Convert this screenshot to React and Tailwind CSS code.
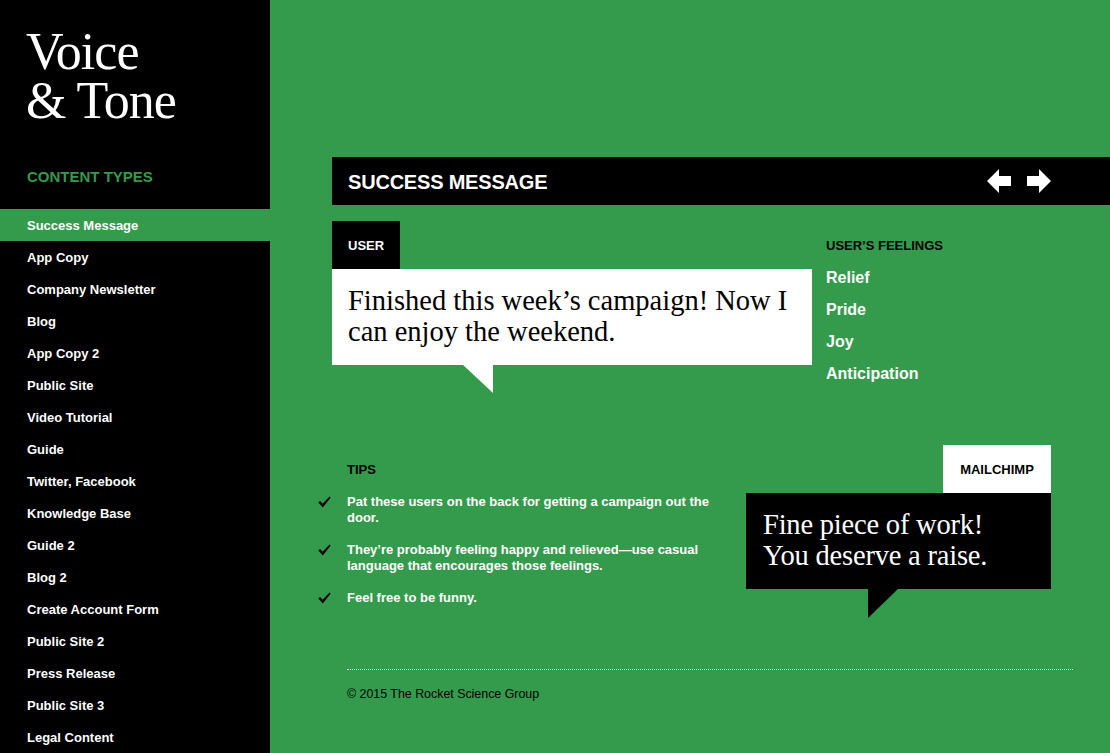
import React from "react";

const GREEN = "bg-[#339b4b]";

const navItems = [
  "Success Message",
  "App Copy",
  "Company Newsletter",
  "Blog",
  "App Copy 2",
  "Public Site",
  "Video Tutorial",
  "Guide",
  "Twitter, Facebook",
  "Knowledge Base",
  "Guide 2",
  "Blog 2",
  "Create Account Form",
  "Public Site 2",
  "Press Release",
  "Public Site 3",
  "Legal Content",
];

const feelings = ["Relief", "Pride", "Joy", "Anticipation"];

const tips = [
  "Pat these users on the back for getting a campaign out the door.",
  "They\u2019re probably feeling happy and relieved\u2014use casual language that encourages those feelings.",
  "Feel free to be funny.",
];

const sans = "font-['Liberation_Sans',Arial,sans-serif]";
const serif = "font-['Liberation_Serif','Times_New_Roman',serif]";

function ArrowLeft() {
  return (
    <svg width="24" height="24" viewBox="0 0 24 24" aria-hidden="true">
      <polygon points="0,12 12,0 12,7 24,7 24,17 12,17 12,24" fill="#fff" />
    </svg>
  );
}

function ArrowRight() {
  return (
    <svg width="24" height="24" viewBox="0 0 24 24" aria-hidden="true">
      <polygon points="24,12 12,0 12,7 0,7 0,17 12,17 12,24" fill="#fff" />
    </svg>
  );
}

function Check() {
  return (
    <svg width="13" height="12" viewBox="0 0 13 12" aria-hidden="true">
      <path d="M0.3 6.4 L2.1 4.9 L4.6 7.8 L11.6 0.6 L12.7 1.6 L4.8 11.4 Z" fill="#000" />
    </svg>
  );
}

export default function App() {
  return (
    <div className={`flex w-[1110px] h-[753px] overflow-hidden ${sans}`}>
      {/* Sidebar */}
      <aside className="w-[270px] shrink-0 bg-black flex flex-col">
        <h1 className={`${serif} h-[125px] text-white text-[52px] leading-[49px] tracking-[-1px] pl-[26px] pt-[27px] font-normal`}>
          Voice
          <br />
          &amp; Tone
        </h1>
        <div className="pl-[27px] mt-[43px] text-[15px] font-bold text-[#339b4b] leading-[18px]">
          CONTENT TYPES
        </div>
        <ul className="mt-[23px]">
          {navItems.map((item, i) => (
            <li
              key={item}
              className={`h-[32px] flex items-center pl-[27px] pt-[1px] text-[13px] font-bold text-white ${
                i === 0 ? GREEN : ""
              }`}
            >
              {item}
            </li>
          ))}
        </ul>
      </aside>

      {/* Main */}
      <main className={`flex-1 ${GREEN} pl-[62px] pt-[157px]`}>
        <div className="h-[48px] bg-black flex items-center justify-between pl-4 pr-[59px]">
          <h2 className="text-white text-[20px] font-bold tracking-[-0.2px] pt-[1px]">SUCCESS MESSAGE</h2>
          <div className="flex gap-[16px]">
            <ArrowLeft />
            <ArrowRight />
          </div>
        </div>

        {/* User message + feelings */}
        <div className="flex mt-4 h-[144px]">
          <div className="w-[480px] relative">
            <div className="w-[68px] h-[48px] bg-black text-white text-[13px] font-bold flex items-center pl-4 pt-[1px]">
              USER
            </div>
            <div className={`bg-white h-[96px] pl-4 pr-4 pt-[16px] ${serif} text-[28.5px] leading-[31px] text-black`}>
              Finished this week&rsquo;s campaign! Now I can enjoy the weekend.
            </div>
            <svg className="absolute left-[130px] top-[143px]" width="31" height="29" viewBox="0 0 31 29" aria-hidden="true">
              <polygon points="0,0 31,0 31,29" fill="#fff" />
            </svg>
          </div>
          <div className="ml-[14px] pt-[17px]">
            <div className="text-[13px] font-bold text-black leading-[16px]">USER&rsquo;S FEELINGS</div>
            <ul className="mt-[8px]">
              {feelings.map((f) => (
                <li key={f} className="h-[32px] flex items-center text-[16px] font-bold text-white">
                  {f}
                </li>
              ))}
            </ul>
          </div>
        </div>

        {/* Tips + MailChimp reply */}
        <div className="flex mt-[80px] h-[144px]">
          <div className="w-[428px] -ml-[14px] pt-[17px]">
            <div className="pl-[29px] text-[13px] font-bold text-black leading-[16px]">TIPS</div>
            <ul className="mt-[16px] flex flex-col gap-[16px]">
              {tips.map((t) => (
                <li key={t} className="flex">
                  <span className="w-[29px] shrink-0 pt-[2px]">
                    <Check />
                  </span>
                  <span className="w-[372px] text-[13px] font-bold text-white leading-[16px]">{t}</span>
                </li>
              ))}
            </ul>
          </div>
          <div className="w-[305px] relative">
            <div className="ml-auto w-[108px] h-[48px] bg-white text-black text-[13px] font-bold flex items-center justify-center pt-[1px]">
              MAILCHIMP
            </div>
            <div className={`bg-black h-[96px] pl-[17px] pt-[16px] ${serif} text-white text-[28.5px] leading-[31px] tracking-[-0.2px]`}>
              Fine piece of work!
              <br />
              You deserve a raise.
            </div>
            <svg className="absolute left-[122px] top-[143px]" width="31" height="30" viewBox="0 0 31 30" aria-hidden="true">
              <polygon points="0,0 31,0 0,30" fill="#000" />
            </svg>
          </div>
        </div>

        {/* Footer */}
        <div className="mt-[80px] ml-[15px] mr-[37px] border-t border-dotted border-white" />
        <p className="ml-[15px] mt-[17px] text-[12.4px] text-black leading-[14px]">
          &copy; 2015 The Rocket Science Group
        </p>
      </main>
    </div>
  );
}
